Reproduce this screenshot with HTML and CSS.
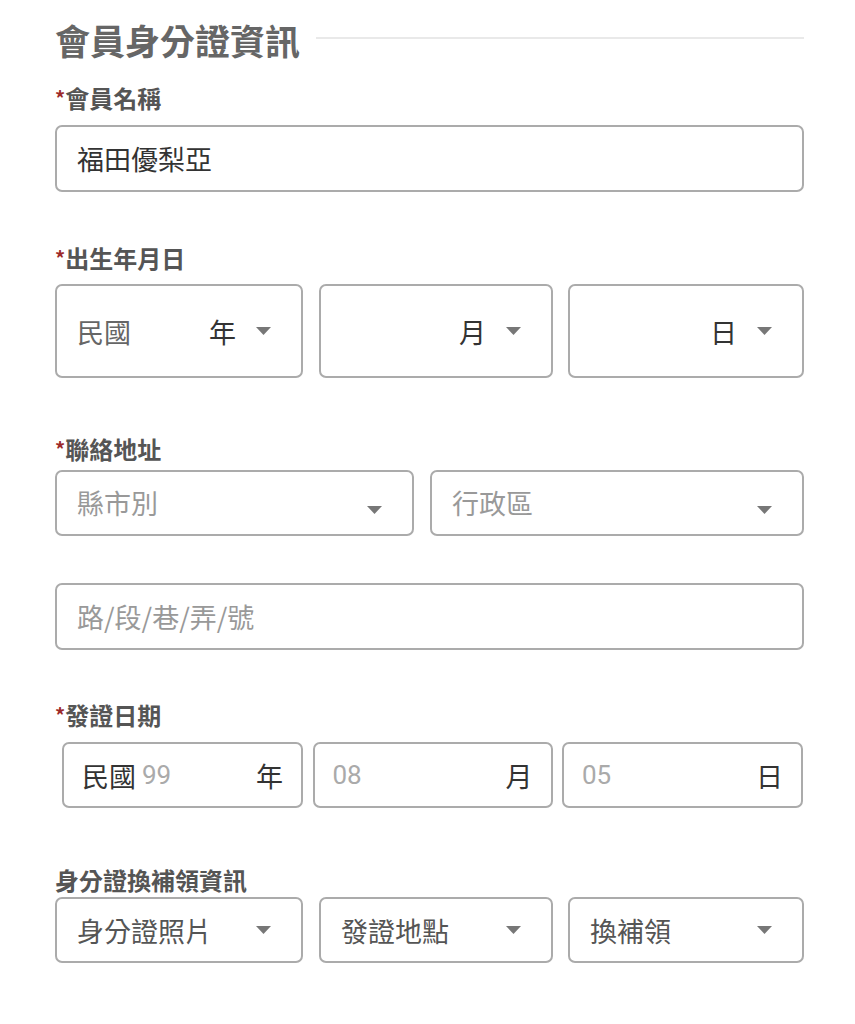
FILE: index.html
```html
<!DOCTYPE html>
<html lang="zh-Hant">
<head>
<meta charset="utf-8">
<title>會員身分證資訊</title>
<link rel="stylesheet" href="styles.css">
</head>
<body>
<div class="page">
  <div class="section-head">
    <h2 class="section-title">會員身分證資訊</h2>
    <div class="section-line"></div>
  </div>

  <div class="label l-name"><span class="req">*</span>會員名稱</div>
  <div class="field text-field"><span class="value">福田優梨亞</span></div>

  <div class="label l-birth"><span class="req">*</span>出生年月日</div>
  <div class="row row-birth">
    <div class="field select tall">
      <span class="prefix">民國</span>
      <span class="unit">年</span>
      <svg class="arrow" viewBox="0 0 15 8"><polygon points="0,0 15,0 7.5,8"/></svg>
    </div>
    <div class="field select tall">
      <span class="unit">月</span>
      <svg class="arrow" viewBox="0 0 15 8"><polygon points="0,0 15,0 7.5,8"/></svg>
    </div>
    <div class="field select tall">
      <span class="unit">日</span>
      <svg class="arrow" viewBox="0 0 15 8"><polygon points="0,0 15,0 7.5,8"/></svg>
    </div>
  </div>

  <div class="label l-addr"><span class="req">*</span>聯絡地址</div>
  <div class="row row-addr">
    <div class="field select addr">
      <span class="placeholder">縣市別</span>
      <svg class="arrow low" viewBox="0 0 15 8"><polygon points="0,0 15,0 7.5,8"/></svg>
    </div>
    <div class="field select addr">
      <span class="placeholder">行政區</span>
      <svg class="arrow low" viewBox="0 0 15 8"><polygon points="0,0 15,0 7.5,8"/></svg>
    </div>
  </div>
  <div class="field text-field street"><span class="placeholder">路/段/巷/弄/號</span></div>

  <div class="label l-issue"><span class="req">*</span>發證日期</div>
  <div class="row row-issue">
    <div class="field date">
      <span class="prefix dark">民國</span><span class="num">99</span>
      <span class="unit">年</span>
    </div>
    <div class="field date">
      <span class="num">08</span>
      <span class="unit">月</span>
    </div>
    <div class="field date">
      <span class="num">05</span>
      <span class="unit">日</span>
    </div>
  </div>

  <div class="label l-renew">身分證換補領資訊</div>
  <div class="row row-birth row-renew">
    <div class="field select">
      <span class="option">身分證照片</span>
      <svg class="arrow" viewBox="0 0 15 8"><polygon points="0,0 15,0 7.5,8"/></svg>
    </div>
    <div class="field select">
      <span class="option">發證地點</span>
      <svg class="arrow" viewBox="0 0 15 8"><polygon points="0,0 15,0 7.5,8"/></svg>
    </div>
    <div class="field select">
      <span class="option">換補領</span>
      <svg class="arrow" viewBox="0 0 15 8"><polygon points="0,0 15,0 7.5,8"/></svg>
    </div>
  </div>
</div>
</body>
</html>
```

FILE: styles.css
```css
* {
  box-sizing: border-box;
}

html, body {
  margin: 0;
  padding: 0;
  background: #ffffff;
}

body {
  font-family: "Noto Sans CJK TC", "Noto Sans", sans-serif;
  color: #333333;
}

.page {
  width: 855px;
  padding: 20px 51px 40px 55px;
}

.section-head {
  display: flex;
  align-items: center;
  height: 40px;
}

.section-title {
  margin: 0;
  font-size: 35px;
  line-height: 40px;
  font-weight: 700;
  color: #666666;
  white-space: nowrap;
}

.section-line {
  flex: 1;
  height: 2px;
  background: #e9e9e9;
  margin-left: 16px;
  margin-top: -4px;
}

.label {
  font-size: 24px;
  line-height: 30px;
  height: 30px;
  font-weight: 700;
  color: #555555;
}

.req {
  color: #9c2a2a;
  font-size: 20px;
  vertical-align: 2px;
}

.l-name { margin-top: 23px; margin-bottom: 12px; }
.l-birth { margin-top: 51px; margin-bottom: 11px; }
.l-addr { margin-top: 56px; margin-bottom: 6px; }
.l-issue { margin-top: 50px; margin-bottom: 12px; }
.l-renew { margin-top: 57px; margin-bottom: 2px; }

.field {
  display: flex;
  align-items: center;
  border: 2px solid #ababab;
  border-radius: 7px;
  background: #ffffff;
  font-size: 27px;
  line-height: 1;
  height: 66px;
  padding: 0 20px 0 20px;
}

.text-field {
  height: 67px;
}

.street {
  margin-top: 47px;
}

.value {
  color: #333333;
}

.placeholder {
  color: #999999;
}

.row {
  display: grid;
}

.row-birth {
  grid-template-columns: 248px 234px 235px;
  column-gap: 16px;
}

.row-birth .field:nth-child(3) {
  margin-left: -1px;
}

.tall {
  height: 94px;
}

.row-addr {
  grid-template-columns: 359px 374px;
  column-gap: 16px;
}

.row-issue {
  margin-left: 7px;
  grid-template-columns: 241px 240px 241px;
  column-gap: 9.5px;
}

.select {
  padding-right: 30px;
}

.prefix {
  color: #666666;
}

.prefix.dark {
  color: #333333;
}

.option {
  color: #555555;
}

.unit {
  margin-left: auto;
  color: #333333;
}

.num {
  font-family: Roboto, "Noto Sans", sans-serif;
  color: #aaaaaa;
  margin-left: 6px;
  font-size: 26px;
}

.date .num:first-child {
  margin-left: 0;
}

.date {
  padding-left: 18px;
  padding-right: 18px;
}

.arrow {
  width: 15px;
  height: 8px;
  margin-left: 20px;
  fill: #777777;
  flex: none;
}

.select .option + .arrow,
.select .placeholder + .arrow {
  margin-left: auto;
}

.arrow.low {
  margin-top: 14px;
}

.addr .placeholder {
  margin-top: -2px;
}
```
